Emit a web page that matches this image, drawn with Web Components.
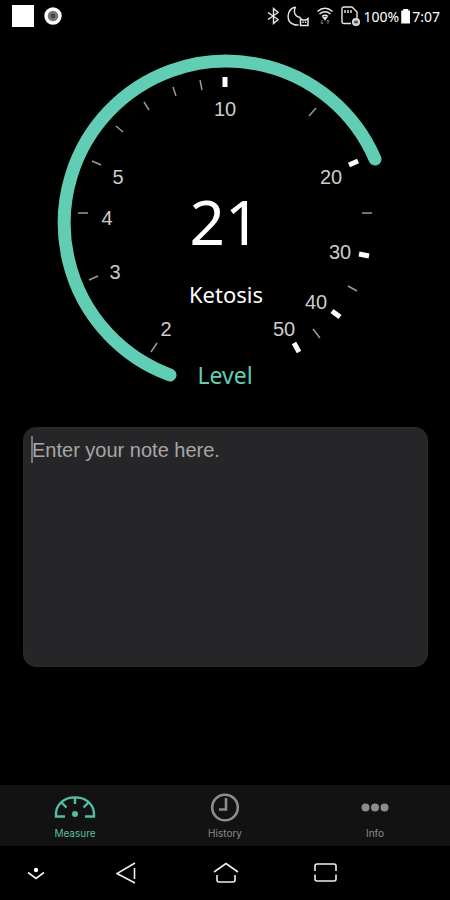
<!DOCTYPE html>
<html lang="en">
<head>
<meta charset="utf-8">
<meta name="viewport" content="width=device-width, initial-scale=1">
<title>Ketosis Level</title>
<style>
  html, body { margin: 0; height: 100%; background: #000; }
  body { font-family: "Liberation Sans", Arial, sans-serif; color: #fff; }
</style>
</head>
<body>
<keto-app></keto-app>
<script>
const define = (name, html, setup) => {
  const template = document.createElement('template');
  template.innerHTML = html;
  customElements.define(name, class extends HTMLElement {
    constructor() {
      super();
      this.attachShadow({ mode: 'open' }).append(template.content.cloneNode(true));
    }
    connectedCallback() { if (setup) setup(this, this.shadowRoot); }
  });
};

define('status-bar', `
<style>
  :host { display: flex; align-items: center; height: 32px; padding: 0 10px 0 12px; font: 14px "Noto Sans", sans-serif; }
  svg { display: block; fill: none; stroke: #e8e8e8; stroke-width: 1.4; }
  .left, .right { display: flex; align-items: center; }
  .left { gap: 10px; }
  .right { gap: 7px; margin-left: auto; }
  .power { display: flex; align-items: center; gap: 2px; margin-left: -4px; }
  .square { width: 22px; height: 22px; background: #fff; }
  .battery { width: 9px; height: 15px; background: #fff; clip-path: polygon(0 2px, 2px 2px, 2px 0, 7px 0, 7px 2px, 100% 2px, 100% 100%, 0 100%); }
</style>
<div class="left">
  <div class="square"></div>
  <svg width="19" height="20" viewBox="0 0 19 20"><circle cx="9" cy="10" r="7" fill="#777" stroke="#fff" stroke-width="3.4"/><circle cx="9" cy="10" r="2.4" fill="#444" stroke="none"/></svg>
</div>
<div class="right">
  <svg width="13" height="18" viewBox="0 0 13 18"><path d="M1 5.500 11 12.500 6.500 16.500V1.500L11 5.500 1 12.500"/></svg>
  <svg width="22" height="22" viewBox="0 0 22 22"><path d="M8.500 2C-.5 4-1.500 17 7 19.500q2 .8 4.500.2M8.500 2C6 7 8 12 13.500 12.500"/><path d="M13.500 20.500v-7l2 1.500h3.500l2-1.500v7zM16 18v-1.500M18.500 18v-1.500" stroke-width="1.500"/></svg>
  <svg width="18" height="20" viewBox="0 0 18 20"><path d="M1.500 5.500Q9-1 16.500 5.500M3.500 8Q9 3.500 14.500 8M6 10.500Q9 8 12 10.500" stroke-width="1.600"/><path d="m7.500 11.500 1.500 2 1.500-2z" fill="#eee"/><path d="M6 14v4M4.500 16.500 6 18l1.500-1.500M12 18v-4M10.500 15.500 12 14l1.500 1.500" stroke="#777" stroke-width="1"/></svg>
  <svg width="20" height="20" viewBox="0 0 20 20"><path d="M10 17.500H3q-2 0-2-2V3q0-2 2-2h8l5 5v6M4 4v3M7 4v3M10 4v3"/><circle cx="15" cy="16" r="3.300" fill="#aaa"/><path d="M13.500 16h3" stroke="#222"/></svg>
  <div class="power"><span>100%</span><div class="battery"></div><time>7:07</time></div>
</div>`);

define('keto-dial', `
<style>
  :host { display: block; width: 80%; margin: 10px auto 0; }
  svg { display: block; width: 100%; overflow: visible; }
  .arc { fill: none; stroke: #60cdb4; stroke-width: 13; stroke-linecap: round; }
  .minor { stroke: #999; stroke-width: 1.5; }
  .major { stroke: #fff; stroke-width: 5; }
  text { text-anchor: middle; font-family: "Noto Sans", sans-serif; fill: #fff; }
  .mark { font: 20px "Liberation Sans", Arial, sans-serif; fill: #ccc; }
  .value { font-size: 62px; }
  .name { font-size: 22px; }
  .level { font-size: 23px; fill: #60cdb4; }
</style>
<svg viewBox="45 42 360 350" role="img" aria-label="Ketosis level 21">
  <path class="arc" d="M170 375A162 162 0 1 1 375 159"/>
  <g class="ticks"></g>
  <g class="marks"></g>
  <text class="value" x="225" y="245">21</text>
  <text class="name" x="226" y="303">Ketosis</text>
  <text class="level" x="225" y="384">Level</text>
</svg>`, (host, root) => {
  const ns = 'http://www.w3.org/2000/svg';
  const add = (parent, tag, attrs, text) => {
    const el = document.createElementNS(ns, tag);
    for (const k in attrs) el.setAttribute(k, attrs[k]);
    if (text) el.textContent = text;
    root.querySelector(parent).append(el);
  };
  const ticks = [
    ['minor', 157, 343, 151, 352], ['minor', 98, 276, 89, 280], ['minor', 88, 213, 78, 213],
    ['minor', 101, 165, 92, 161], ['minor', 123, 132, 116, 126], ['minor', 149, 110, 144, 102],
    ['minor', 176, 96, 173, 87], ['minor', 202, 90, 200, 80], ['major', 225, 87, 225, 77],
    ['minor', 309, 116, 316, 108], ['major', 349, 165, 358, 161], ['minor', 362, 213, 372, 213],
    ['major', 359, 254, 369, 256], ['minor', 348, 286, 357, 291], ['major', 332, 311, 340, 317],
    ['minor', 313, 329, 320, 338], ['major', 294, 343, 299, 352]
  ];
  for (const [cls, x1, y1, x2, y2] of ticks) add('.ticks', 'line', { class: cls, x1, y1, x2, y2 });
  const marks = [[2, 166, 336], [3, 115, 279], [4, 107, 225], [5, 118, 184], [10, 225, 116],
    [20, 331, 184], [30, 340, 259], [40, 316, 309], [50, 284, 336]];
  for (const [n, x, y] of marks) add('.marks', 'text', { class: 'mark', x, y }, String(n));
});

define('note-field', `
<style>
  :host { display: block; position: relative; margin: 35px 22px 0 23px; }
  textarea { display: block; box-sizing: border-box; width: 100%; height: 240px; margin: 0; padding: 10px 8px; border: 1px solid #2a2a2c; border-radius: 13px; background: #262628; color: #ddd; font: 20px/24px "Liberation Sans", Arial, sans-serif; resize: none; outline: none; }
  textarea::placeholder { color: #a6a6a6; opacity: 1; }
  .caret { position: absolute; left: 8px; top: 9px; width: 2px; height: 27px; background: #777; }
</style>
<textarea aria-label="Note" placeholder="Enter your note here."></textarea>
<span class="caret"></span>`);

define('tab-item', `
<style>
  :host { display: flex; flex: 1; color: #8c8c8c; }
  :host([active]) { color: #56bda5; }
  button { flex: 1; display: flex; flex-direction: column; align-items: center; gap: 2px; margin: 0; padding: 5px 0 0; border: 0; background: none; color: inherit; font: 10px/14px Inter, sans-serif; }
  ::slotted(svg) { display: block; height: 34px; fill: none; stroke: currentColor; }
</style>
<button type="button"><slot name="icon"></slot><slot></slot></button>`);

define('tab-bar', `
<style>:host { display: flex; height: 61px; background: #121212; }</style>
<tab-item active><svg slot="icon" width="44" height="34" viewBox="0 0 44 34" stroke-width="2.400"><path d="M12 26.500H3C1 1 43 1 41 26.500H32M22 7v7M9 13l4.500 4.500M35 13l-4.500 4.500"/><circle cx="22" cy="24" r="3" fill="currentColor" stroke="none"/></svg>Measure</tab-item>
<tab-item><svg slot="icon" width="34" height="34" viewBox="0 0 34 34" stroke-width="2.600"><circle cx="17" cy="17.500" r="12.800"/><path d="M18 8v11.500H11"/></svg>History</tab-item>
<tab-item><svg slot="icon" width="34" height="34" viewBox="0 0 34 34"><g fill="currentColor" stroke="none"><circle cx="7.500" cy="17.500" r="4"/><circle cx="17" cy="17.500" r="4"/><circle cx="26.500" cy="17.500" r="4"/></g></svg>Info</tab-item>`);

define('system-nav', `
<style>
  :host { display: grid; grid-template-columns: 71fr 109fr 91fr 109fr 70fr; height: 54px; }
  button { display: grid; place-items: center; margin: 0; padding: 0; border: 0; background: none; }
  svg { display: block; fill: none; stroke: #eee; stroke-width: 1.6; }
</style>
<button aria-label="Hide bar"><svg width="18" height="24" viewBox="0 0 18 24"><circle cx="9" cy="9" r="2.200" fill="#fff" stroke="none"/><path d="m1 11.500 8 6 8-6"/></svg></button>
<button aria-label="Back"><svg width="20" height="22" viewBox="0 0 20 22"><path d="M19 1 1 11.500 19 21M18.500 6v11"/></svg></button>
<button aria-label="Home"><svg width="26" height="22" viewBox="0 0 26 22"><path d="M1 10 13 1.500 25 10M4 13v5q0 2 2 2h14q2 0 2-2v-5"/></svg></button>
<button aria-label="Recent apps"><svg width="23" height="20" viewBox="0 0 23 20"><path d="M1 8V3q0-2 2-2h17q2 0 2 2v5M1 11.500V16q0 2 2 2h17q2 0 2-2v-4.500"/></svg></button>`);

define('keto-app', `
<style>
  :host { display: flex; flex-direction: column; min-height: 100vh; background: #000; }
  main { flex: 1; }
</style>
<status-bar></status-bar>
<main><keto-dial></keto-dial><note-field></note-field></main>
<tab-bar></tab-bar>
<system-nav></system-nav>`);
</script>
</body>
</html>
